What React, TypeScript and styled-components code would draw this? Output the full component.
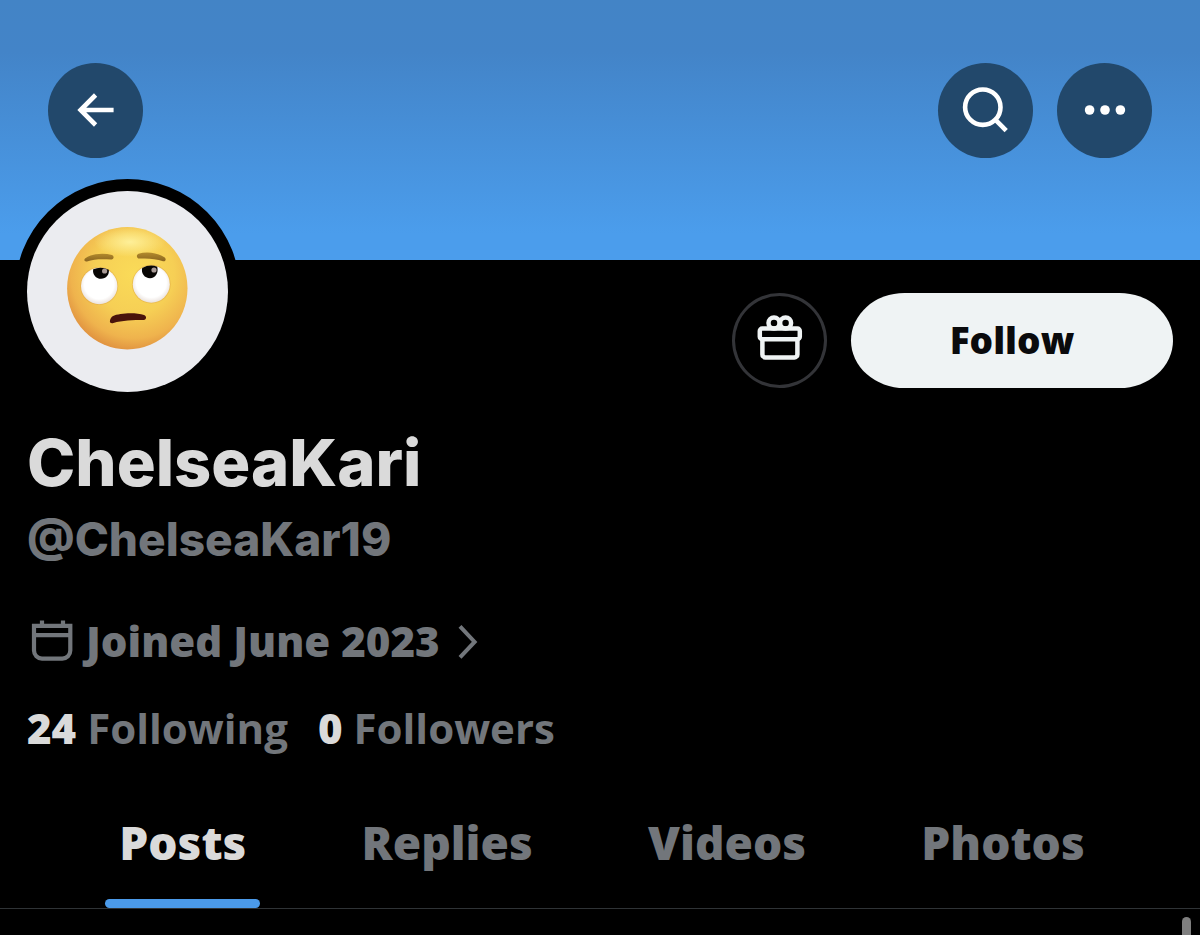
import React, { useState } from "react";
import styled, { createGlobalStyle } from "styled-components";

const display = `Inter, "Liberation Sans", sans-serif`;
const text = `"Open Sans", "Noto Sans", sans-serif`;
const muted = "#72767b";
const bright = "#dadada";

const GlobalStyle = createGlobalStyle`
  *, *::before, *::after { box-sizing: border-box; }
  html { background: #000; }
  body { margin: 0; background: #000; font-family: ${text}; font-weight: 800; }
  button { font: inherit; border: 0; padding: 0; margin: 0; cursor: pointer; }
  a { color: inherit; text-decoration: none; }
`;

const Page = styled.main`
  display: flex;
  flex-direction: column;
  min-height: 100vh;
  background: #000;
`;

const Banner = styled.header`
  display: flex;
  align-items: flex-start;
  gap: 24px;
  height: 260px;
  padding: 63px 48px 0;
  background: linear-gradient(#4384c6, #4384c8 20%, #4b9dec 90%);
`;

const RoundButton = styled.button<{ $outlined?: boolean }>`
  flex: none;
  width: 95px;
  height: 95px;
  border-radius: 50%;
  background: ${(p) => (p.$outlined ? "#000" : "#22486b")};
  box-shadow: ${(p) => (p.$outlined ? "inset 0 0 0 3px #333438" : "none")};
  color: ${(p) => (p.$outlined ? "#eff3f4" : "#fff")};

  svg { display: block; }
`;

const Spacer = styled.div`
  flex: 1;
`;

const ProfileTop = styled.div`
  display: flex;
  justify-content: space-between;
  align-items: flex-end;
  margin-top: -81px;
  padding: 0 27px 0 15px;
`;

const Avatar = styled.div`
  width: 225px;
  height: 225px;
  border: 12px solid #000;
  border-radius: 50%;
  background: #000;

  svg { display: block; }
`;

const Actions = styled.div`
  display: flex;
  gap: 24px;
  margin-bottom: 16px;
`;

const FollowButton = styled.button`
  width: 322px;
  height: 95px;
  padding-bottom: 2px;
  border-radius: 54px / 48px;
  background: #eff3f4;
  color: #0a0a0c;
  font-size: 37px;
  line-height: 64px;
`;

const Details = styled.section`
  display: flex;
  flex-direction: column;
  align-items: flex-start;
  padding: 19px 27px 0;
`;

const Name = styled.h1`
  margin: 0;
  color: ${bright};
  font: 800 65px/80px ${display};
`;

const Handle = styled.p`
  margin: 0;
  color: ${muted};
  font: 800 46px/72px ${display};
`;

const Joined = styled.a`
  display: flex;
  align-items: center;
  gap: 11px;
  margin-top: 36px;
  color: ${muted};
  font-size: 42px;
  line-height: 60px;

  svg { flex: none; }
`;

const Stats = styled.div`
  display: flex;
  gap: 30px;
  margin-top: 27px;
  color: ${muted};
  font-size: 42px;
  font-weight: 700;
  line-height: 60px;

  strong { color: ${bright}; font-weight: 800; }
`;

const Tabs = styled.nav`
  display: flex;
  justify-content: space-evenly;
  margin-top: 44px;
  padding-left: 4px;
  border-bottom: 1px solid #2f3336;
`;

const Tab = styled.button<{ $active: boolean }>`
  position: relative;
  height: 106px;
  padding-bottom: 26px;
  background: none;
  color: ${(p) => (p.$active ? bright : muted)};
  font-size: 46px;
  line-height: 64px;

  &::after {
    content: "";
    display: ${(p) => (p.$active ? "block" : "none")};
    position: absolute;
    left: -14px;
    right: -14px;
    bottom: 0;
    height: 9px;
    border-radius: 5px;
    background: #4b9ae9;
  }
`;

const Feed = styled.section`
  display: flex;
  flex: 1;
  justify-content: flex-end;
  padding: 8px 9px 0 0;
`;

const ScrollThumb = styled.div`
  width: 9px;
  min-height: 18px;
  border-radius: 5px 5px 0 0;
  background: #7f7f7f;
`;

const BackIcon = () => (
  <svg width="95" height="95" viewBox="0 0 95 95" fill="none" stroke="currentColor" strokeWidth="4.6" aria-hidden="true">
    <path d="M47.6 32 L32.6 47 L47.6 62 M32.6 47 H65.6" />
  </svg>
);

const SearchIcon = () => (
  <svg width="95" height="95" viewBox="0 0 95 95" fill="none" stroke="currentColor" strokeWidth="4.6" aria-hidden="true">
    <circle cx="44.8" cy="44.2" r="17.7" />
    <path d="M57.3 56.7 L68.2 67.6" />
  </svg>
);

const MoreIcon = () => (
  <svg width="95" height="95" viewBox="0 0 95 95" fill="currentColor" aria-hidden="true">
    <circle cx="32.6" cy="47" r="4.8" />
    <circle cx="48" cy="47" r="4.8" />
    <circle cx="63.4" cy="47" r="4.8" />
  </svg>
);

const GiftIcon = () => (
  <svg width="95" height="95" viewBox="0 0 95 95" fill="none" stroke="currentColor" strokeWidth="4.5" aria-hidden="true">
    <rect x="27.8" y="35.6" width="40" height="10.6" rx="2.4" />
    <path d="M30.4 46.2 V61.4 a3 3 0 0 0 3 3 H62.4 a3 3 0 0 0 3 -3 V46.2" />
    <circle cx="42" cy="30" r="5.5" />
    <circle cx="53.6" cy="30" r="5.5" />
  </svg>
);

const CalendarIcon = () => (
  <svg width="48" height="48" viewBox="0 0 48 48" fill="none" stroke="currentColor" strokeWidth="4.2" aria-hidden="true">
    <path d="M7 8.8 H43.3 V33.6 a8 8 0 0 1 -8 8 H15 a8 8 0 0 1 -8 -8 Z M7 18.2 H43.3 M15 3.4 V8 M36 3.4 V8" />
  </svg>
);

const ChevronIcon = () => (
  <svg width="32" height="48" viewBox="0 0 32 48" fill="none" stroke="currentColor" strokeWidth="4" aria-hidden="true">
    <path d="M9 9.4 L23.6 24.9 L9 40.4" />
  </svg>
);

const RollingEyesPicture = () => (
  <svg width="201" height="201" viewBox="0 0 201 201" role="img" aria-label="Face with rolling eyes">
    <defs>
      <radialGradient id="face" cx="0.56" cy="0.38" r="0.66">
        <stop offset="0" stopColor="#fadb58" />
        <stop offset="0.5" stopColor="#f6cf55" />
        <stop offset="0.8" stopColor="#efb34d" />
        <stop offset="1" stopColor="#dd8b3d" />
      </radialGradient>
      <radialGradient id="shine" cx="0.5" cy="0.5" r="0.5">
        <stop offset="0" stopColor="#fff3a0" stopOpacity="0.9" />
        <stop offset="1" stopColor="#fff3a0" stopOpacity="0" />
      </radialGradient>
      <radialGradient id="eye" cx="0.5" cy="0.45" r="0.58">
        <stop offset="0.7" stopColor="#fff" />
        <stop offset="1" stopColor="#e6dcd6" />
      </radialGradient>
      <linearGradient id="brow" x1="0" y1="0" x2="0" y2="1">
        <stop offset="0" stopColor="#b28a2c" />
        <stop offset="1" stopColor="#8a6420" />
      </linearGradient>
    </defs>
    <circle cx="100.5" cy="100.5" r="100.5" fill="#ebecf0" />
    <g transform="translate(33 29)">
      <ellipse cx="67.3" cy="68.3" rx="60.2" ry="61.2" fill="url(#face)" />
      <ellipse cx="70" cy="22" rx="36" ry="15" fill="url(#shine)" />
      <circle cx="39.2" cy="66" r="19" fill="#d99b3c" opacity="0.4" />
      <circle cx="91.3" cy="64.2" r="19.4" fill="#d99b3c" opacity="0.4" />
      <circle cx="39.2" cy="66" r="18.2" fill="url(#eye)" />
      <circle cx="91.3" cy="64.2" r="18.5" fill="url(#eye)" />
      <path d="M33.2 49.2 Q41 45.8 48.8 49.8 C49.6 54.6 46 58.8 41 58.8 C36 58.8 32.2 54.4 33.2 49.2 Z" fill="#080604" />
      <path d="M82.2 48 Q90 43.8 97.2 46.8 C98.8 53 95.4 58.2 90 58.2 C84.6 58.2 80.8 53.4 82.2 48 Z" fill="#080604" />
      <circle cx="44.6" cy="51" r="2.6" fill="#a89a96" />
      <circle cx="94" cy="50" r="2.6" fill="#a89a96" />
      <path d="M25 38.4 C32 33.6 43 32.4 52 35 C54.6 36.2 53.8 39.6 51.4 39.6 C42 38.8 34 39 27 41.4 C24.6 42 23.6 39.8 25 38.4 Z" fill="url(#brow)" />
      <path d="M78.5 33.8 C87 31.2 98 32.8 104.8 37.6 C106.8 39.8 105 42 103 41.2 C96 38.8 88 38 79.4 38.6 C76.4 38.4 76 35 78.5 33.8 Z" fill="url(#brow)" />
      <path d="M50.6 102.8 C49.2 102 50 98 52.6 96.2 C60 92.8 76 92.4 84 95 C87 96.4 86.6 99.6 83.8 100 C73 100 62 100.4 53.4 103 C52.2 103.4 51.2 103.4 50.6 102.8 Z" fill="#4a130b" />
    </g>
  </svg>
);

const tabNames = ["Posts", "Replies", "Videos", "Photos"];

export default function App() {
  const [active, setActive] = useState("Posts");

  return (
    <Page>
      <GlobalStyle />
      <Banner>
        <RoundButton aria-label="Back"><BackIcon /></RoundButton>
        <Spacer />
        <RoundButton aria-label="Search"><SearchIcon /></RoundButton>
        <RoundButton aria-label="More"><MoreIcon /></RoundButton>
      </Banner>
      <ProfileTop>
        <Avatar><RollingEyesPicture /></Avatar>
        <Actions>
          <RoundButton $outlined aria-label="Send a gift"><GiftIcon /></RoundButton>
          <FollowButton>Follow</FollowButton>
        </Actions>
      </ProfileTop>
      <Details>
        <Name>ChelseaKari</Name>
        <Handle>@ChelseaKar19</Handle>
        <Joined href="#about">
          <CalendarIcon />
          <span>Joined June 2023</span>
          <ChevronIcon />
        </Joined>
        <Stats>
          <a href="#following"><strong>24</strong> Following</a>
          <a href="#followers"><strong>0</strong> Followers</a>
        </Stats>
      </Details>
      <Tabs aria-label="Profile sections">
        {tabNames.map((name) => (
          <Tab key={name} $active={name === active} aria-pressed={name === active} onClick={() => setActive(name)}>
            {name}
          </Tab>
        ))}
      </Tabs>
      <Feed aria-label="Posts">
        <ScrollThumb />
      </Feed>
    </Page>
  );
}
